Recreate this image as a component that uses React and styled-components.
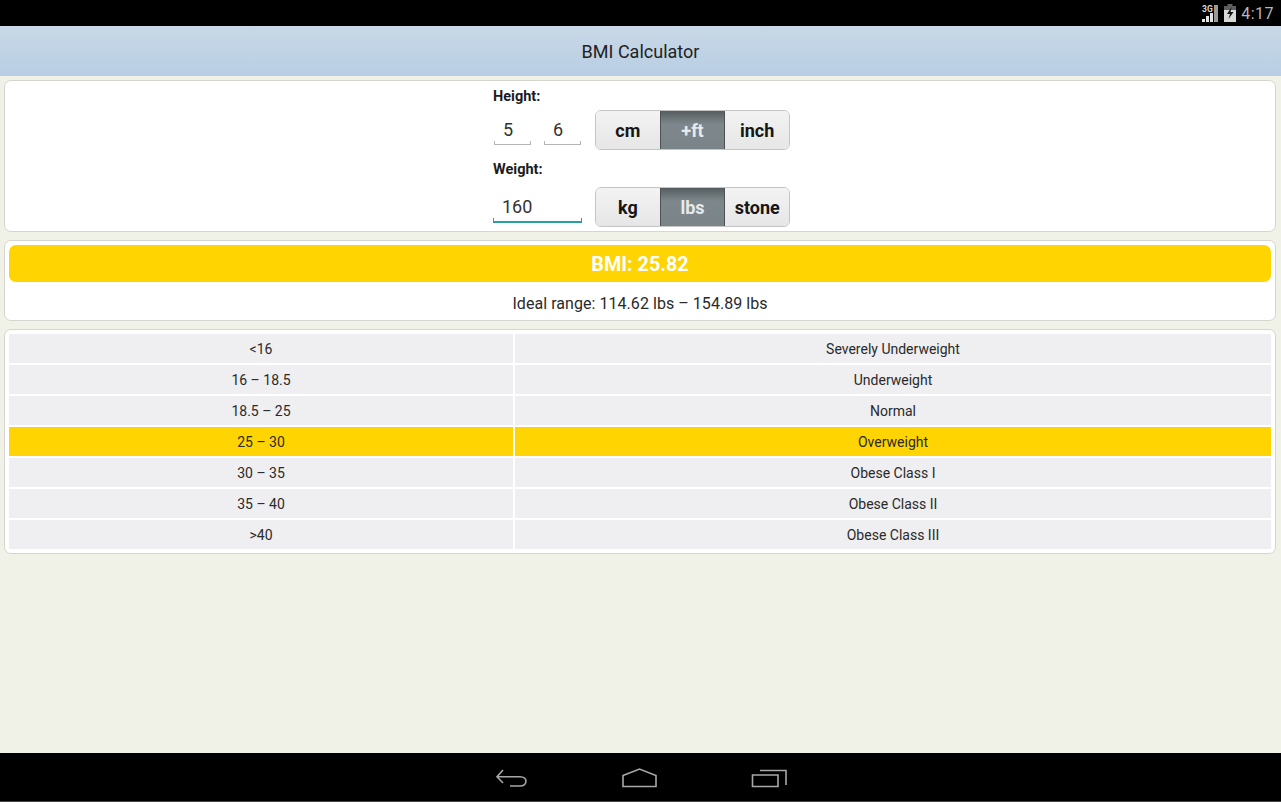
import React from "react";
import styled, { createGlobalStyle } from "styled-components";

const GlobalStyle = createGlobalStyle`
  html, body {
    margin: 0;
    padding: 0;
    background: #000;
  }
  body {
    font-family: Roboto, "Liberation Sans", sans-serif;
    color: #1a1a1a;
  }
`;

const ranges = [
  { range: "<16", label: "Severely Underweight" },
  { range: "16 – 18.5", label: "Underweight" },
  { range: "18.5 – 25", label: "Normal" },
  { range: "25 – 30", label: "Overweight", active: true },
  { range: "30 – 35", label: "Obese Class I" },
  { range: "35 – 40", label: "Obese Class II" },
  { range: ">40", label: "Obese Class III" },
];

function Segments({ items, selected }) {
  return (
    <SegmentGroup>
      {items.map((item) => (
        <Segment key={item} $on={item === selected}>
          {item}
        </Segment>
      ))}
    </SegmentGroup>
  );
}

export default function App() {
  return (
    <Screen>
      <GlobalStyle />
      <StatusBar>
        <svg width="17" height="18" viewBox="0 0 17 18">
          <text x="0" y="8" fontSize="8.500" fontWeight="700" fill="#d8d8d8" fontFamily="Roboto">3G</text>
          <path d="M0 18h3v-3H0zM4 18h3v-6H4zM8 18h3V9H8z" fill="#e4e4e4" />
          <path d="M12 18h4V1h-4z" fill="#9a9a9a" />
        </svg>
        <svg width="12" height="18" viewBox="0 0 12 18">
          <path d="M3.500 0h5v2H12v16H0V2h3.500z" fill="#5e5e5e" />
          <path d="M0 6h12v12H0z" fill="#d8d8d8" />
          <path d="M7.500 3 3 10h3l-1.500 5L9.500 8H6.500z" fill="#111" />
        </svg>
        <Clock>4:17</Clock>
      </StatusBar>
      <Header>BMI Calculator</Header>
      <Content>
        <FormCard>
          <Form>
            <Label>Height:</Label>
            <FieldRow $top={5} $bottom={12}>
              <Inputs>
                <Input $width={37}>5</Input>
                <Input $width={37}>6</Input>
              </Inputs>
              <Segments items={["cm", "+ft", "inch"]} selected="+ft" />
            </FieldRow>
            <Label>Weight:</Label>
            <FieldRow $top={9} $bottom={0}>
              <Inputs>
                <Input $width={89} $focused>160</Input>
              </Inputs>
              <Segments items={["kg", "lbs", "stone"]} selected="lbs" />
            </FieldRow>
          </Form>
        </FormCard>
        <ResultCard>
          <Result>BMI: 25.82</Result>
          <Ideal>Ideal range: 114.62 lbs – 154.89 lbs</Ideal>
        </ResultCard>
        <TableCard>
          {ranges.map((row) => (
            <Row key={row.range}>
              <Cell $on={row.active}>{row.range}</Cell>
              <Cell $on={row.active}>{row.label}</Cell>
            </Row>
          ))}
        </TableCard>
      </Content>
      <NavBar>
        <svg width="34" height="20" viewBox="0 0 34 20" fill="none" stroke="#a8a8a8" strokeWidth="1.600">
          <path d="M8 2 2 8.700 8 15M2 8.700h23c8 0 8 9.300 0 9.300H15" />
        </svg>
        <svg width="38" height="20" viewBox="0 0 38 20" fill="none" stroke="#a8a8a8" strokeWidth="1.600">
          <path d="M2 7.500 18.500 1 35 7.500v11H2z" />
        </svg>
        <svg width="36" height="20" viewBox="0 0 36 20" fill="none" stroke="#a8a8a8" strokeWidth="1.600">
          <path d="M1.500 7H27v11.500H1.500zM9 2.500h26V17" />
        </svg>
      </NavBar>
    </Screen>
  );
}

const Screen = styled.div`
  width: 1281px;
  height: 802px;
  display: flex;
  flex-direction: column;
  overflow: hidden;
`;

const StatusBar = styled.div`
  height: 26px;
  background: #000;
  display: flex;
  align-items: center;
  justify-content: flex-end;
  gap: 5px;
  padding-right: 7px;
`;

const Clock = styled.span`
  color: #b8b8b8;
  font-size: 16px;
  letter-spacing: 0.5px;
`;

const Header = styled.div`
  height: 50px;
  background: linear-gradient(#c9d8e6, #b8cee4);
  display: flex;
  align-items: center;
  justify-content: center;
  font-size: 18px;
  color: #222;
`;

const Content = styled.div`
  flex: 1;
  background: #f0f2e7;
  padding: 4px 5px 0 4px;
  display: flex;
  flex-direction: column;
  gap: 8px;
`;

const Card = styled.div`
  background: #fff;
  border: 1px solid #d6d6d0;
  border-radius: 7px;
  box-sizing: border-box;
`;

const FormCard = styled(Card)`
  height: 152px;
  display: flex;
  justify-content: center;
  padding-left: 3px;
`;

const Form = styled.div`
  width: 297px;
  padding-top: 8px;
`;

const Label = styled.div`
  font-size: 14.5px;
  font-weight: 700;
  line-height: 16px;
  color: #1c1c1c;
`;

const FieldRow = styled.div`
  display: flex;
  justify-content: space-between;
  margin: ${(p) => p.$top}px 0 ${(p) => p.$bottom}px;
  height: 40px;
`;

const Inputs = styled.div`
  display: flex;
  gap: 13px;
  padding-left: 1px;
`;

const Input = styled.div`
  box-sizing: border-box;
  width: ${(p) => p.$width}px;
  height: ${(p) => (p.$focused ? 36 : 35)}px;
  margin-left: ${(p) => (p.$focused ? -1 : 0)}px;
  padding: 8px 0 0 9px;
  font-size: 18px;
  line-height: 24px;
  color: #333;
  border-bottom: ${(p) => (p.$focused ? "2px solid #2a9cb0" : "1px solid #b4b4b4")};
  background:
    linear-gradient(${(p) => (p.$focused ? "#2a9cb0" : "#b4b4b4")} 0 0) left bottom / 1px 3px no-repeat,
    linear-gradient(${(p) => (p.$focused ? "#2a9cb0" : "#b4b4b4")} 0 0) right bottom / 1px 3px no-repeat;
`;

const SegmentGroup = styled.div`
  display: flex;
  width: 195px;
  height: 40px;
  box-sizing: border-box;
  border-radius: 6px;
  border: 1px solid #c4c4c4;
  overflow: hidden;
`;

const Segment = styled.div`
  flex: 1;
  display: flex;
  align-items: center;
  justify-content: center;
  font-size: 18px;
  font-weight: 700;
  color: ${(p) => (p.$on ? "#e6eaeb" : "#161616")};
  background: ${(p) =>
    p.$on
      ? "linear-gradient(#565d60, #7e888c 35%, #7a8488 100%)"
      : "linear-gradient(#f3f3f3, #e6e6e6)"};
  border-left: ${(p) => (p.$on ? "1px solid #4c5254" : "none")};
  border-right: ${(p) => (p.$on ? "1px solid #4c5254" : "none")};
`;

const ResultCard = styled(Card)`
  height: 81px;
  padding: 4px 4px 0;
`;

const Result = styled.div`
  box-sizing: border-box;
  height: 37px;
  padding-top: 2px;
  background: #ffd400;
  border-radius: 7px;
  display: flex;
  align-items: center;
  justify-content: center;
  color: #fff;
  font-size: 19.8px;
  font-weight: 700;
`;

const Ideal = styled.div`
  text-align: center;
  font-size: 16px;
  letter-spacing: 0.05px;
  line-height: 20px;
  margin-top: 12px;
  color: #2a2a2a;
`;

const TableCard = styled(Card)`
  height: 225px;
  padding: 4px 4px 0;
  display: flex;
  flex-direction: column;
  gap: 2px;
`;

const Row = styled.div`
  display: grid;
  grid-template-columns: 504px 1fr;
  gap: 2px;
`;

const Cell = styled.div`
  height: 29px;
  display: flex;
  align-items: center;
  justify-content: center;
  font-size: 14px;
  color: #2a2a2a;
  background: ${(p) => (p.$on ? "#ffd400" : "#efeef0")};
`;

const NavBar = styled.div`
  height: 49px;
  background: #000;
  box-sizing: border-box;
  border-bottom: 1px solid #444;
  display: flex;
  align-items: center;
  justify-content: center;
  gap: 92px;
  padding: 2px 0 0 1px;
`;
